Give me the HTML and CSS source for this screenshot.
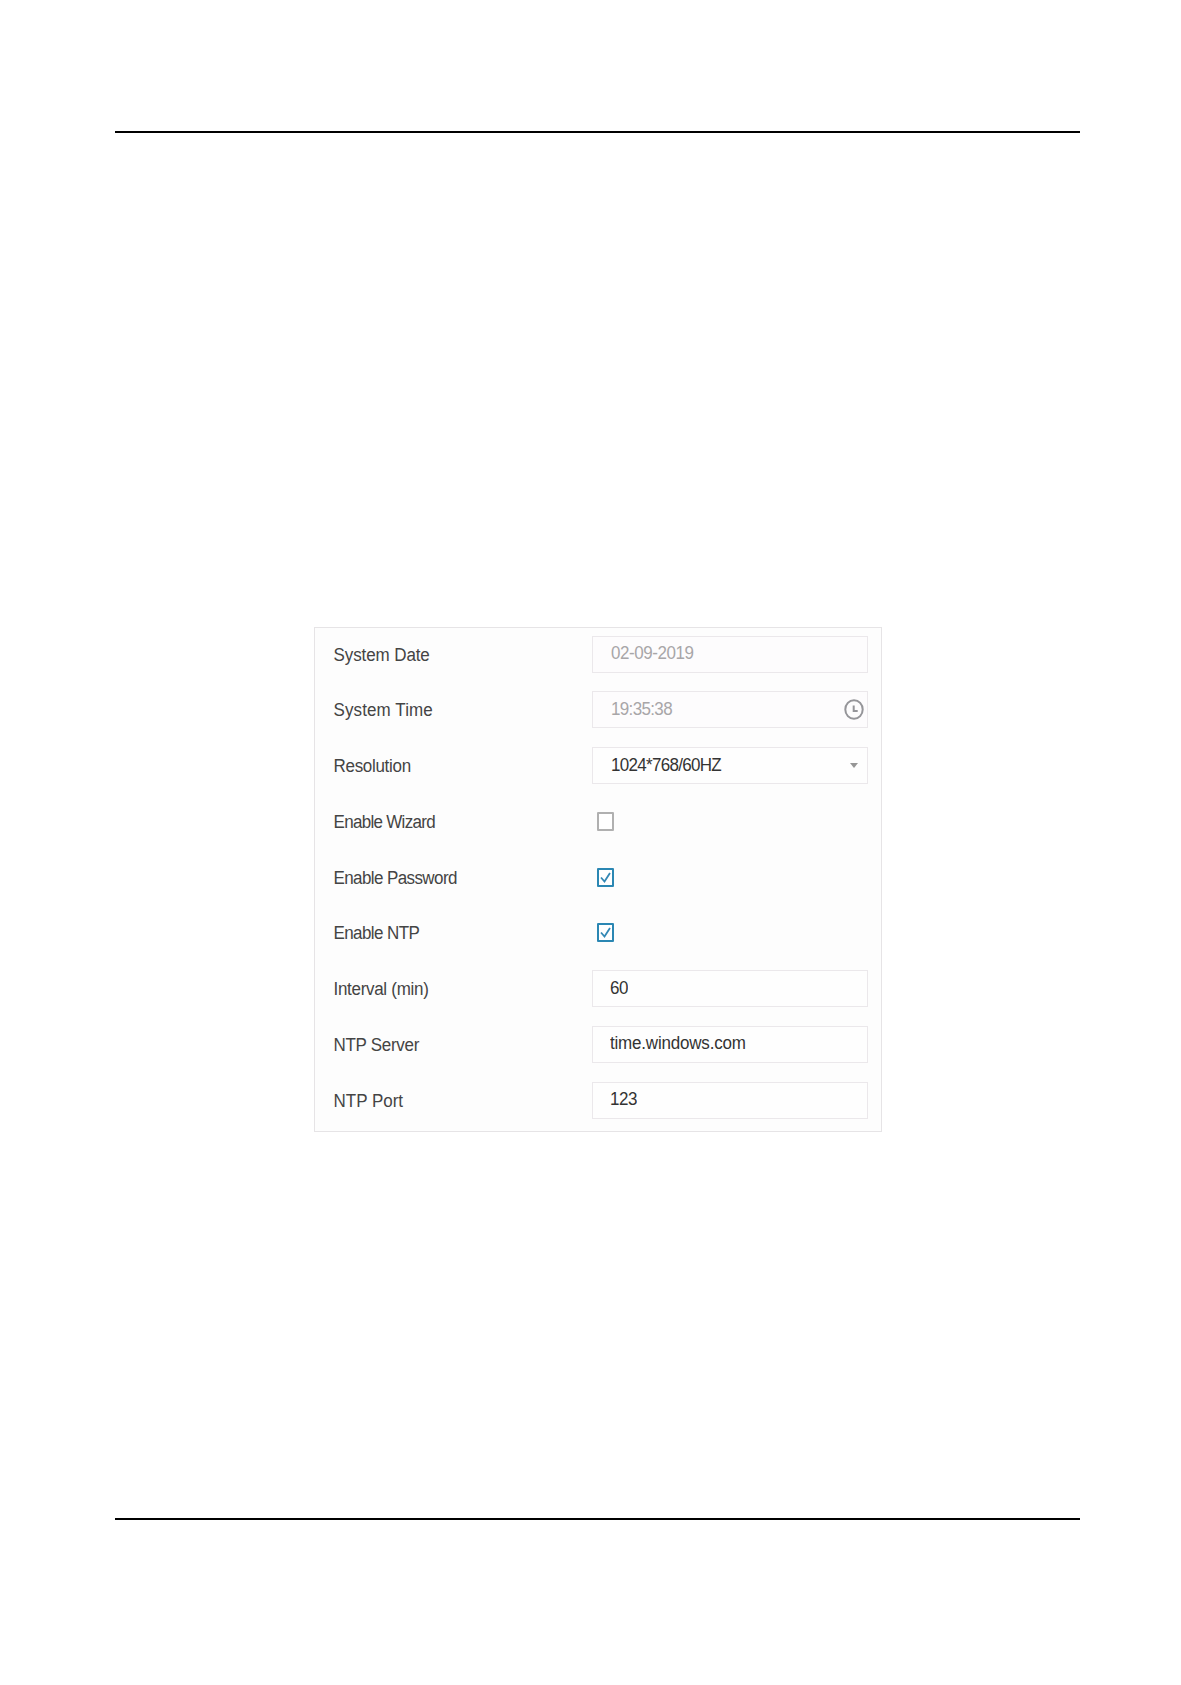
FILE: index.html
```
<!DOCTYPE html>
<html lang="en">

<head>
	<meta charset="utf-8">
	<title>General Settings</title>
	<link rel="stylesheet" href="styles.css">
</head>

<body>
	<main class="page">
		<section class="panel">
			<div class="row">
				<span class="label date-label">System Date</span>
				<div class="field disabled"><span class="value date">02-09-2019</span></div>
			</div>
			<div class="row">
				<span class="label wide">System Time</span>
				<div class="field disabled">
					<span class="value time">19:35:38</span>
					<svg class="clock" viewBox="0 0 20 21">
						<ellipse cx="10" cy="10.5" rx="8.7" ry="9.3" />
						<path d="M9.7 6.5v5.5h4" />
					</svg>
				</div>
			</div>
			<div class="row">
				<span class="label snug">Resolution</span>
				<div class="field">
					<span class="value mode">1024*768/60HZ</span>
					<svg class="caret" viewBox="0 0 8 5">
						<path d="M0 0h8L4 5z" />
					</svg>
				</div>
			</div>
			<div class="row">
				<span class="label wizard">Enable Wizard</span>
				<span class="checkbox"></span>
			</div>
			<div class="row">
				<span class="label tight">Enable Password</span>
				<span class="checkbox checked">
					<svg class="tick" viewBox="0 0 13 15"><path d="M2 7.5l3.5 4L11 3" /></svg>
				</span>
			</div>
			<div class="row">
				<span class="label tight">Enable NTP</span>
				<span class="checkbox checked">
					<svg class="tick" viewBox="0 0 13 15"><path d="M2 7.5l3.5 4L11 3" /></svg>
				</span>
			</div>
			<div class="row">
				<span class="label snug">Interval (min)</span>
				<div class="field"><span class="value port">60</span></div>
			</div>
			<div class="row">
				<span class="label snug">NTP Server</span>
				<div class="field"><span class="value server">time.windows.com</span></div>
			</div>
			<div class="row">
				<span class="label">NTP Port</span>
				<div class="field"><span class="value port">123</span></div>
			</div>
		</section>
	</main>
</body>

</html>
```
FILE: styles.css
```
* {
	box-sizing: border-box;
}

body {
	margin: 0;
	background-color: #fff;
	font-family: "Liberation Sans", Arial, sans-serif;
	font-size: 17px;
	color: #444;
}

.page {
	width: 965px;
	height: 1389px;
	margin: 131px 0 0 115px;
	padding: 494px 0 0 199px;
	border-top: 2px solid #000;
	border-bottom: 2px solid #000;
}

.panel {
	display: flex;
	flex-direction: column;
	gap: 18.75px;
	width: 568px;
	height: 505px;
	padding: 7.6px 0 0 18.5px;
	border: 1px solid #e6e4e6;
	background-color: #fdfdfd;
}

.row {
	display: flex;
	align-items: center;
	height: 37px;
	flex-shrink: 0;
}

.label {
	width: 258.5px;
	padding-top: 3px;
	line-height: 20px;
	white-space: nowrap;
	transform: scaleY(1.06);
}

.wide {
	letter-spacing: 0.1px;
}

.date-label {
	letter-spacing: -0.1px;
}

.snug {
	letter-spacing: -0.3px;
}

.tight {
	letter-spacing: -0.6px;
}

.wizard {
	letter-spacing: -0.7px;
}

.field {
	display: flex;
	align-items: center;
	justify-content: space-between;
	width: 276px;
	height: 37px;
	padding: 0 3px 0 17px;
	border: 1px solid #ebe8eb;
	background-color: #fefefe;
	color: #333;
}

.disabled {
	padding-left: 18px;
	background-color: #fdfcfd;
	color: #a8a6a8;
}

.value {
	line-height: 20px;
	white-space: nowrap;
	transform: scaleY(1.06);
}

.date {
	letter-spacing: -0.45px;
}

.time {
	letter-spacing: -0.65px;
}

.mode {
	margin-left: 1px;
	letter-spacing: -0.7px;
}

.server {
	letter-spacing: -0.2px;
}

.port {
	letter-spacing: -0.5px;
}

.clock {
	width: 20px;
	height: 21px;
	fill: none;
	stroke: #959599;
	stroke-width: 2;
}

.caret {
	width: 8px;
	height: 5px;
	margin-right: 6px;
	fill: #969696;
}

.checkbox {
	width: 17px;
	height: 19px;
	margin-left: 5px;
	border: 2px solid #b0b0b0;
	border-radius: 1px;
	background-color: #fff;
}

.checked {
	border-color: #2b87b3;
}

.tick {
	display: block;
	width: 13px;
	height: 15px;
	fill: none;
	stroke: #3388b5;
	stroke-width: 1.8;
}
```
